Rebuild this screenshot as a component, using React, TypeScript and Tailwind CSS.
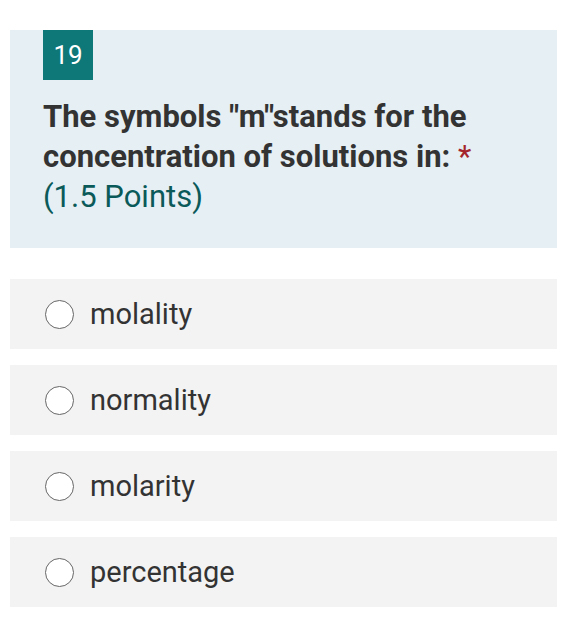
import React from "react";

const options = ["molality", "normality", "molarity", "percentage"];

export default function App() {
  return (
    <div className="w-[561px] h-[618px] bg-white pt-[30px] pl-[10px] pr-[4px]" style={{ fontFamily: "Roboto, 'Liberation Sans', sans-serif" }}>
      <div className="bg-[#e6eff3] h-[218px] pl-[33px] pr-4">
        <div className="w-[50px] h-[50px] bg-[#0e7878] text-white text-[26px] flex items-center justify-center leading-none">19</div>
        <div className="mt-[17px] text-[31px] leading-[40px] text-[#333333]">
          <div className="font-bold">The symbols "m"stands for the</div>
          <div className="font-bold">
            concentration of solutions in: <span className="text-[#a4262c] font-normal">*</span>
          </div>
          <div className="text-[#0b5a5a]">(1.5 Points)</div>
        </div>
      </div>
      <div className="mt-[31px] flex flex-col gap-[16px]">
        {options.map((o) => (
          <div key={o} className="h-[70px] bg-[#f3f3f3] flex items-center pl-[35px]">
            <div className="w-[29px] h-[29px] rounded-full border-[1.5px] border-[#666666] bg-white shrink-0" />
            <span className="ml-[16px] text-[29px] text-[#333333] leading-none">{o}</span>
          </div>
        ))}
      </div>
    </div>
  );
}
